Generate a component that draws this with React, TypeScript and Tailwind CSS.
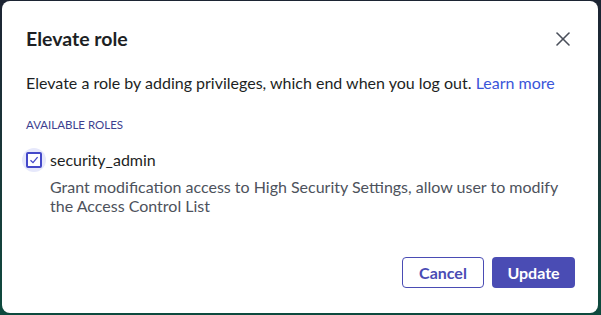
import { X } from "lucide-react";

export default function App() {
  return (
    <div className="h-[315px] w-[601px] overflow-hidden bg-gradient-to-b from-[#1c2433] to-[#0d4a3e] font-['Lato',sans-serif]">
      <div className="ml-[2px] mt-[1px] h-[312px] w-[596px] rounded-lg bg-white px-6 pt-6">
        <div className="flex h-[28px] items-center justify-between">
          <h2 className="text-[19.5px] font-bold leading-[28px] text-[#1d1f24]">Elevate role</h2>
          <button className="-mr-[1px] text-[#4a4f5a]">
            <X size={24} strokeWidth={1.6} />
          </button>
        </div>

        <p className="mt-[20px] text-[16px] leading-[20px] text-[#1d1f24]">
          Elevate a role by adding privileges, which end when you log out.{" "}
          <a className="text-[#3a55d9]">Learn more</a>
        </p>

        <div className="mt-[24px] text-[11.5px] leading-[16px] uppercase text-[#3d3f8f]">Available roles</div>

        <div className="mt-[17px] flex items-start gap-[8px]">
          <div className="relative mt-[2px] h-[16px] w-[16px] shrink-0">
            <div className="absolute -inset-[4px] rounded-full bg-[#e6e8fb]" />
            <div className="relative flex h-[16px] w-[16px] items-center justify-center rounded-[2px] border-2 border-[#4448c9] bg-white">
              <svg width="10" height="10" viewBox="0 0 10 10">
                <path d="M1.5 5.2 L4 7.6 L8.6 2.2" fill="none" stroke="#4448c9" strokeWidth="1.3" />
              </svg>
            </div>
          </div>
          <div>
            <div className="text-[16px] leading-[20px] text-[#1d1f24]">security_admin</div>
            <p className="mt-[7px] text-[16px] leading-[19px] text-[#4d525c]">
              Grant modification access to High Security Settings, allow user to modify
              <br />
              the Access Control List
            </p>
          </div>
        </div>

        <div className="mt-[42px] -mr-[1px] flex justify-end gap-[8px]">
          <button className="h-[31px] w-[82px] rounded border border-[#4a4cb4] text-[16px] font-bold text-[#4a4cb4]">
            Cancel
          </button>
          <button className="h-[31px] w-[83px] rounded bg-[#4a4cb4] text-[16px] font-bold text-white">
            Update
          </button>
        </div>
      </div>
    </div>
  );
}
